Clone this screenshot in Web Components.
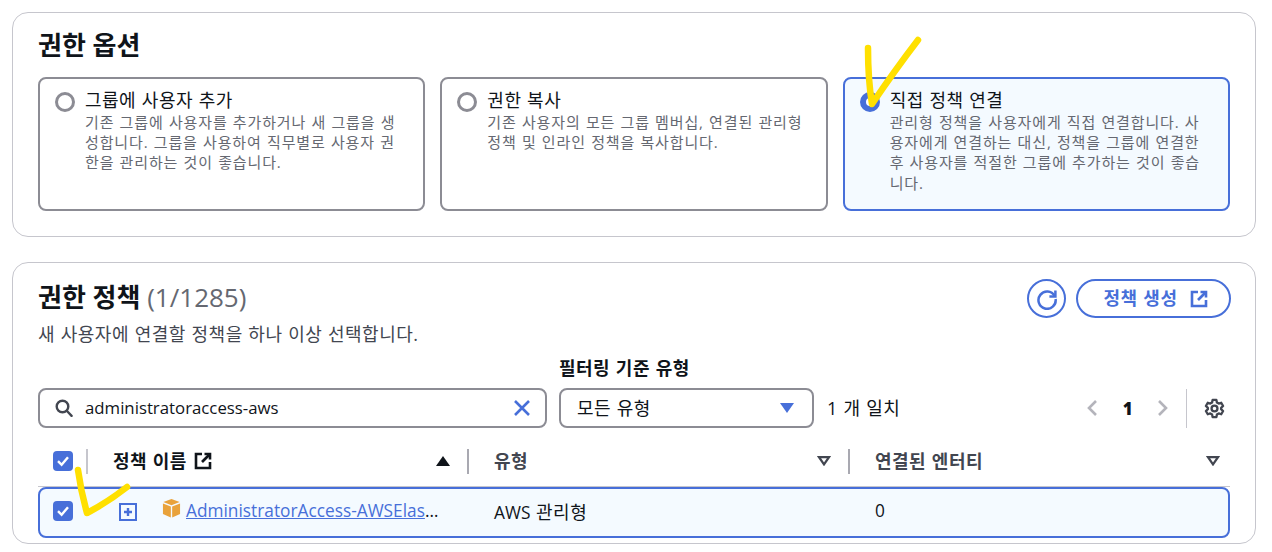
<!DOCTYPE html>
<html lang="ko">
<head>
<meta charset="utf-8">
<title>권한 옵션</title>
<style>
  html, body { margin: 0; background: #fff; overflow: hidden; }
  body {
    position: relative;
    height: 552px;
    box-sizing: border-box;
    padding: 12px 16px 0 12px;
    font-family: "Open Sans", "Noto Sans CJK KR", sans-serif;
    font-size: 18px;
    letter-spacing: 0.5px;
    word-spacing: 0.5px;
    color: #0f141a;
    display: flex;
    flex-direction: column;
    gap: 25px;
  }
</style>
</head>
<body>
  <perm-options></perm-options>
  <perm-policies></perm-policies>
  <pen-marks></pen-marks>

<script>
const BLUE = "#476fd9";

const ICONS = {
  external: `<svg width="18" height="18" viewBox="0 0 18 18" fill="none" stroke="currentColor" stroke-width="2.6"><path d="M8 2H2v14h14v-6"/><path d="M10.5 2H16v5.5"/><path d="M16 2L8 10"/></svg>`,
  search: `<svg width="18" height="18" viewBox="0 0 18 18" fill="none" stroke="#424650" stroke-width="2.4" stroke-linecap="round"><circle cx="7.5" cy="7.5" r="5.8"/><path d="M12 12l4.6 4.8"/></svg>`,
  close: `<svg width="18" height="18" viewBox="0 0 18 18" fill="none" stroke="${BLUE}" stroke-width="2.6"><path d="M2 2l14 14M16 2L2 16"/></svg>`,
  refresh: `<svg width="22" height="22" viewBox="0 0 22 22" fill="none" stroke="${BLUE}" stroke-width="2.5"><path d="M18.6 8A8.6 8.6 0 1 0 19.6 11"/><path d="M19.4 2.6V8.6H13.4"/></svg>`,
  gear: `<svg width="21" height="21" viewBox="0 0 20 20" fill="none" stroke="#424650" stroke-width="2.2" stroke-linejoin="round"><path d="M8.2 1.8h3.6l.5 2.5 1.7 1 2.4-.8 1.8 3.1-1.9 1.7v1.4l1.9 1.7-1.8 3.1-2.4-.8-1.7 1-.5 2.5H8.2l-.5-2.5-1.7-1-2.4.8-1.8-3.1 1.9-1.7V9.3L1.8 7.6l1.8-3.1 2.4.8 1.7-1z"/><circle cx="10" cy="10" r="2.8"/></svg>`,
  box: `<svg width="19" height="20" viewBox="0 0 20 20"><path d="M10 .5l8.6 3.3L10 7.2 1.4 3.8z" fill="#e9a23b"/><path d="M1 5.2l8.3 3.3V20L1 16.4z" fill="#e9a23b"/><path d="M19 5.2l-8.3 3.3V20l8.3-3.6z" fill="#e9a23b"/></svg>`,
  plus: `<svg width="18" height="18" viewBox="0 0 18 18" fill="none" stroke="${BLUE}"><rect x="1" y="1" width="16" height="16" stroke-width="2"/><path d="M9 5v8M5 9h8" stroke-width="2.4"/></svg>`,
};

class PanelCard extends HTMLElement {
  constructor() {
    super();
    this.attachShadow({ mode: "open" }).innerHTML = `
      <style>
        :host {
          display: block;
          box-sizing: border-box;
          border: 1px solid #c6c6cd;
          border-radius: 16px;
          background: #fff;
          padding: var(--card-pad, 16px 25px);
        }
      </style>
      <slot></slot>`;
  }
}
customElements.define("panel-card", PanelCard);

class OptionTile extends HTMLElement {
  constructor() {
    super();
    this.attachShadow({ mode: "open" }).innerHTML = `
      <style>
        :host {
          display: flex;
          box-sizing: border-box;
          height: 134px;
          border: 2px solid #8c8c94;
          border-radius: 8px;
          padding: 11px 20px 11px 15px;
          gap: 10px;
          background: #fff;
        }
        :host([selected]) { border-color: ${BLUE}; background: #f4faff; }
        .radio {
          flex: none;
          box-sizing: border-box;
          width: 20px;
          height: 20px;
          margin-top: 2px;
          border: 3px solid #8c8c94;
          border-radius: 50%;
          background: #fff;
        }
        :host([selected]) .radio { border: 6px solid ${BLUE}; }
        .text { min-width: 0; flex: 1; word-break: break-all; }
        .title { font-size: 18px; line-height: 20px; }
        .desc {
          font-size: 15px;
          line-height: 20.2px;
          letter-spacing: 0.87px;
          word-spacing: 0.5px;
          color: #656871;
          margin-top: 2px;
        }
      </style>
      <span class="radio"></span>
      <div class="text">
        <div class="title"><slot name="title"></slot></div>
        <div class="desc"><slot></slot></div>
      </div>`;
  }
}
customElements.define("option-tile", OptionTile);

class PermOptions extends HTMLElement {
  constructor() {
    super();
    this.attachShadow({ mode: "open" }).innerHTML = `
      <style>
        :host { display: block; }
        h2 { margin: 0 0 16px; font-size: 26px; line-height: 32px; font-weight: 700; letter-spacing: 0; word-spacing: 0; }
        .tiles { display: grid; grid-template-columns: repeat(3, 1fr); gap: 15px; }
        panel-card { height: 225px; }
      </style>
      <panel-card>
        <h2>권한 옵션</h2>
        <div class="tiles">
          <option-tile><span slot="title">그룹에 사용자 추가</span>기존 그룹에 사용자를 추가하거나 새 그룹을 생성합니다. 그룹을 사용하여 직무별로 사용자 권한을 관리하는 것이 좋습니다.</option-tile>
          <option-tile><span slot="title">권한 복사</span>기존 사용자의 모든 그룹 멤버십, 연결된 관리형 정책 및 인라인 정책을 복사합니다.</option-tile>
          <option-tile selected><span slot="title">직접 정책 연결</span>관리형 정책을 사용자에게 직접 연결합니다. 사용자에게 연결하는 대신, 정책을 그룹에 연결한 후 사용자를 적절한 그룹에 추가하는 것이 좋습니다.</option-tile>
        </div>
      </panel-card>`;
  }
}
customElements.define("perm-options", PermOptions);

class TickBox extends HTMLElement {
  constructor() {
    super();
    this.attachShadow({ mode: "open" }).innerHTML = `
      <style>
        :host {
          display: inline-flex;
          width: 20px;
          height: 20px;
          flex: none;
          border-radius: 4px;
          background: ${BLUE};
          align-items: center;
          justify-content: center;
        }
      </style>
      <svg width="14" height="14" viewBox="0 0 14 14" fill="none" stroke="#fff" stroke-width="2.4"><path d="M2 7.2l3.6 3.6L12 3.2"/></svg>`;
  }
}
customElements.define("tick-box", TickBox);

class TableHead extends HTMLElement {
  constructor() {
    super();
    const sort = this.getAttribute("sort");
    let arrow = "";
    if (sort === "up") {
      arrow = `<svg class="sort" width="14" height="10" viewBox="0 0 14 10"><path d="M7 0l7 10H0z" fill="#0f141a"/></svg>`;
    } else if (sort === "none") {
      arrow = `<svg class="sort" width="14" height="10" viewBox="0 0 14 10" fill="none" stroke="#424650" stroke-width="2.2"><path d="M2 1.2h10L7 8.4z"/></svg>`;
    }
    this.attachShadow({ mode: "open" }).innerHTML = `
      <style>
        :host {
          display: flex;
          align-items: center;
          font-weight: 700;
          line-height: 25px;
          color: #424650;
          min-width: 0;
        }
        :host([active]) { color: #0f141a; }
        .label { flex: 1; display: flex; align-items: center; gap: 7px; }
        .sort { margin-right: 17px; flex: none; }
        .sep { flex: none; width: 2px; height: 25px; background: #a9a9b1; margin-right: 25px; }
        :host([last]) .sep { display: none; }
        :host([last]) .sort { margin-right: 10px; }
      </style>
      <span class="label"><slot></slot></span>
      ${arrow}
      <span class="sep"></span>`;
  }
}
customElements.define("table-head", TableHead);

class PolicyTable extends HTMLElement {
  constructor() {
    super();
    this.attachShadow({ mode: "open" }).innerHTML = `
      <style>
        :host { display: block; }
        .row {
          display: grid;
          grid-template-columns: 75px 381px 381px 1fr;
          align-items: center;
          box-sizing: border-box;
        }
        .head { height: 39px; border-bottom: 1px solid #c6c6cd; padding-bottom: 12px; }
        .head .first { display: flex; align-items: center; padding-left: 15px; }
        .first .sep { width: 2px; height: 25px; background: #c6c6cd; margin-left: 13px; }
        .body {
          height: 51px;
          border: 2px solid ${BLUE};
          border-radius: 8px;
          background: #f4faff;
          padding-bottom: 4px;
          grid-template-columns: 73px 381px 381px 1fr;
        }
        .body .first { padding-left: 13px; display: flex; }
        .name { display: flex; align-items: center; padding-left: 6px; white-space: nowrap; }
        .name .box { margin-left: 25px; margin-right: 5px; display: flex; margin-top: -6px; }
        .plus { display: flex; margin-top: 2px; }
        .en { font-size: 17.3px; letter-spacing: 0; }
        a { color: ${BLUE}; text-decoration: underline; }
      </style>
      <div class="row head">
        <div class="first"><tick-box></tick-box><span class="sep"></span></div>
        <table-head active sort="up">정책 이름 ${ICONS.external}</table-head>
        <table-head sort="none">유형</table-head>
        <table-head last sort="none">연결된 엔터티</table-head>
      </div>
      <div class="row body">
        <div class="first"><tick-box></tick-box></div>
        <div class="name">
          <span class="plus">${ICONS.plus}</span>
          <span class="box">${ICONS.box}</span>
          <span class="en"><a href="#">AdministratorAccess-AWSElas</a>…</span>
        </div>
        <div><span class="en">AWS</span> 관리형</div>
        <div class="en">0</div>
      </div>`;
  }
}
customElements.define("policy-table", PolicyTable);

class PermPolicies extends HTMLElement {
  constructor() {
    super();
    this.attachShadow({ mode: "open" }).innerHTML = `
      <style>
        :host { display: block; }
        panel-card { height: 282px; }
        .top { display: flex; justify-content: space-between; }
        h2 { margin: 0; font-size: 26px; line-height: 36px; font-weight: 700; letter-spacing: 0; word-spacing: 0; }
        h2 span { font-weight: 400; color: #656871; }
        p { margin: 7px 0 0; line-height: 24px; color: #424650; }
        .actions { display: flex; gap: 10px; align-items: flex-start; margin-right: -1px; }
        .round {
          box-sizing: border-box;
          width: 39px;
          height: 39px;
          border: 2px solid ${BLUE};
          border-radius: 50%;
          display: flex;
          align-items: center;
          justify-content: center;
        }
        .pill {
          box-sizing: border-box;
          width: 155px;
          height: 39px;
          padding-left: 5px;
          border: 2px solid ${BLUE};
          border-radius: 20px;
          color: ${BLUE};
          font-weight: 700;
          display: flex;
          align-items: center;
          justify-content: center;
          gap: 13px;
        }
        .pill span { margin-top: -3px; }
        .pill svg { flex: none; }
        .bar { display: flex; align-items: flex-end; margin-top: 10px; }
        .ctl {
          box-sizing: border-box;
          height: 40px;
          border: 2px solid #8c8c94;
          border-radius: 8px;
          display: flex;
          align-items: center;
        }
        .search { width: 509px; padding: 0 14px 0 15px; gap: 12px; }
        .search span { flex: 1; font-size: 16.8px; letter-spacing: 0; margin-top: -2px; }
        .filter { width: 255px; margin-left: 12px; }
        .filter label { display: block; line-height: 24px; font-weight: 700; margin-bottom: 8px; }
        .select { padding: 0 18px 0 16px; justify-content: space-between; }
        .select span { margin-top: -2px; }
        .count { margin-left: 13px; line-height: 40px; color: #0f141a; }
        .pager { margin-left: auto; display: flex; align-items: center; height: 40px; font-size: 17px; font-weight: 700; }
        .pager b { width: 36px; margin: 0 11px 0 12px; text-align: center; }
        .pager .div { width: 1px; height: 39px; background: #c6c6cd; margin: 0 17px 0 17px; }
        policy-table { margin-top: 20px; }
      </style>
      <panel-card style="--card-pad: 16px 25px 0">
        <div class="top">
          <div>
            <h2>권한 정책 <span>(1/1285)</span></h2>
            <p>새 사용자에 연결할 정책을 하나 이상 선택합니다.</p>
          </div>
          <div class="actions">
            <span class="round">${ICONS.refresh}</span>
            <div class="pill"><span>정책 생성</span>${ICONS.external}</div>
          </div>
        </div>
        <div class="bar">
          <div class="ctl search">${ICONS.search}<span>administratoraccess-aws</span>${ICONS.close}</div>
          <div class="filter">
            <label>필터링 기준 유형</label>
            <div class="ctl select"><span>모든 유형</span>
              <svg width="14" height="10" viewBox="0 0 14 10"><path d="M0 0h14L7 10z" fill="${BLUE}"/></svg>
            </div>
          </div>
          <span class="count">1 개 일치</span>
          <div class="pager">
            <svg width="12" height="18" viewBox="0 0 12 18" fill="none" stroke="#b4b4bb" stroke-width="2.6"><path d="M10 2L3 9l7 7"/></svg>
            <b>1</b>
            <svg width="12" height="18" viewBox="0 0 12 18" fill="none" stroke="#b4b4bb" stroke-width="2.6"><path d="M2 2l7 7-7 7"/></svg>
            <span class="div"></span>
            ${ICONS.gear}
            <span style="width:5px"></span>
          </div>
        </div>
        <policy-table></policy-table>
      </panel-card>`;
  }
}
customElements.define("perm-policies", PermPolicies);

// yellow hand-drawn ticks lying over the screenshot
class PenMarks extends HTMLElement {
  constructor() {
    super();
    this.attachShadow({ mode: "open" }).innerHTML = `
      <style>
        :host { position: absolute; inset: 0; pointer-events: none; }
        svg { display: block; }
        path { fill: none; stroke: #ffe000; stroke-width: 6.5; stroke-linecap: round; stroke-linejoin: round; }
      </style>
      <svg width="1272" height="552">
        <path d="M868 48Q868 80 872 104Q895 70 918 40"/>
        <path d="M78 470Q81 492 87 513Q108 502 127 487"/>
      </svg>`;
  }
}
customElements.define("pen-marks", PenMarks);
</script>
</body>
</html>
